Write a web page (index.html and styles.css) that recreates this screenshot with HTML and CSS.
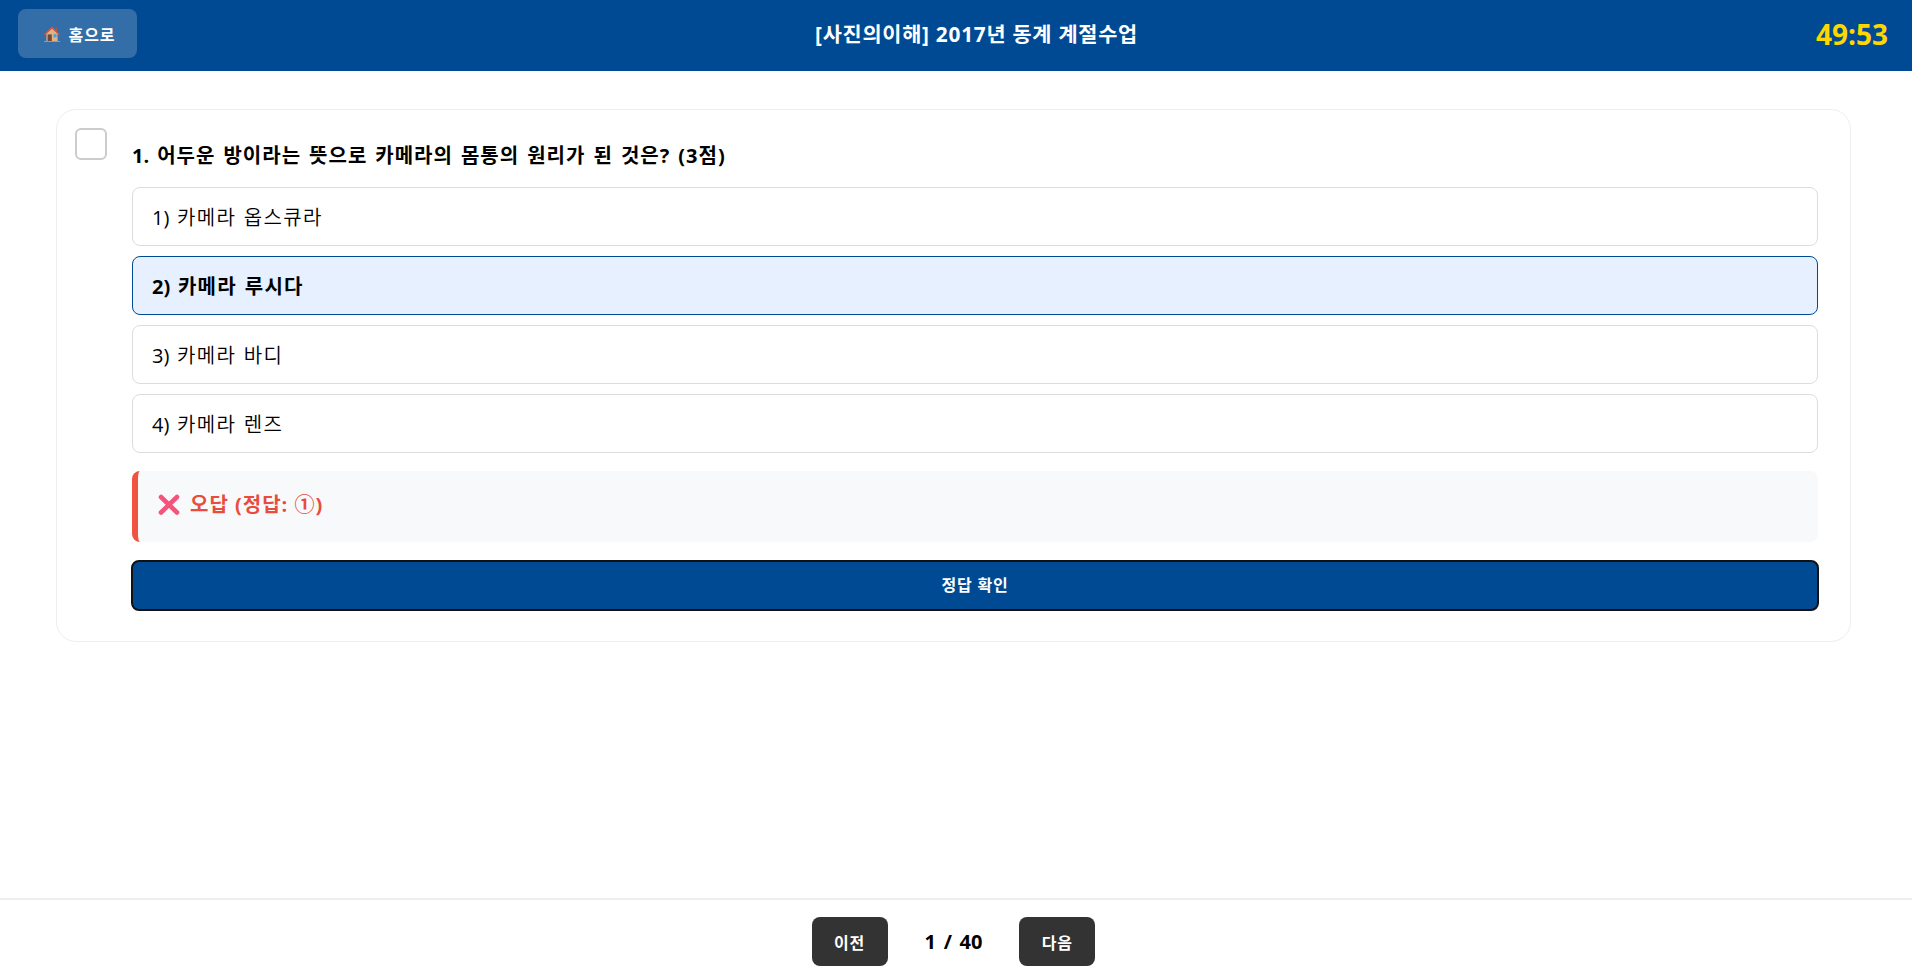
FILE: index.html
```html
<!DOCTYPE html>
<html lang="ko">
<head>
<meta charset="utf-8">
<title>[사진의이해] 2017년 동계 계절수업</title>
<link rel="stylesheet" href="styles.css">
</head>
<body>
<div class="app">
  <header class="topbar">
    <a class="home-btn">
      <svg class="home-icon" viewBox="0 0 16 16" aria-hidden="true">
        <rect x="11.4" y="1.4" width="1.8" height="4.4" fill="#a5574a"/>
        <path d="M2.4 7.4 8 2.4l5.6 5v7.6H2.4z" fill="#e3b27e"/>
        <path d="M0 8.4 8 .6l8 7.8-1 .8L8 2.6 1 9.2z" fill="#e2543f"/>
        <rect x="3.6" y="8.4" width="4.2" height="6.6" fill="#6f4a3c"/>
        <rect x="9.6" y="8.2" width="3" height="3.2" fill="#3fa6dc"/>
        <rect x="0" y="15" width="16" height="1" fill="#4fc76a"/>
      </svg>
      <span>홈으로</span>
    </a>
    <div class="title">[사진의이해] 2017년 동계 계절수업</div>
    <div class="timer">49:53</div>
  </header>

  <main class="content">
    <section class="card">
      <div class="check"></div>
      <div class="question">
        <h2 class="q-title"><span class="num">1.</span> 어두운 방이라는 뜻으로 카메라의 몸통의 원리가 된 것은? (3점)</h2>
        <div class="options">
          <div class="option"><span><span class="num">1)</span> 카메라 옵스큐라</span></div>
          <div class="option selected"><span><span class="num">2)</span> 카메라 루시다</span></div>
          <div class="option"><span><span class="num">3)</span> 카메라 바디</span></div>
          <div class="option"><span><span class="num">4)</span> 카메라 렌즈</span></div>
        </div>
        <div class="feedback">
          <svg class="x-icon" viewBox="0 0 22 22" aria-hidden="true"><path d="M3 3l16 15.5M19 3L3 18.5" stroke="#f4537c" stroke-width="4.6" stroke-linecap="round" fill="none"/></svg>
          <span class="feedback-text">오답 (정답: ①)</span>
        </div>
        <button class="check-btn">정답 확인</button>
      </div>
    </section>
  </main>

  <footer class="pager">
    <button class="nav-btn">이전</button>
    <span class="page">1 / 40</span>
    <button class="nav-btn">다음</button>
  </footer>
</div>
</body>
</html>
```

FILE: styles.css
```css
* { box-sizing: border-box; }
html, body { margin: 0; height: 100%; }
body {
  font-family: "Open Sans", "Noto Sans CJK KR", sans-serif;
  background: #fff;
  color: #000;
}
.app { height: 978px; display: flex; flex-direction: column; }

.topbar {
  height: 71px;
  background: #004a94;
  color: #fff;
  display: flex;
  align-items: center;
  justify-content: space-between;
  padding: 0 24px 4px 18px;
}
.home-btn {
  width: 119px;
  height: 49px;
  padding-left: 5px;
  border-radius: 8px;
  background: rgba(255,255,255,.2);
  display: flex;
  align-items: center;
  justify-content: center;
  gap: 8px;
  font-size: 16px;
  font-weight: 700;
  letter-spacing: 1px;
}
.home-icon { width: 16px; height: 16px; }
.title {
  font-size: 20.8px;
  font-weight: 700;
  letter-spacing: .75px;
  padding-bottom: 2px;
}
.timer { font-size: 28px; font-weight: 700; color: #ffd700; }

.content { flex: 1; padding: 38px 61px 0 56px; }
.card {
  height: 533px;
  border: 1px solid #eee;
  border-radius: 20px;
  display: flex;
  padding: 18px 32px 0 18px;
}
.check {
  width: 32px;
  height: 32px;
  border: 2px solid #ccc;
  border-radius: 6px;
  flex: none;
  margin-right: 25px;
}
.question { flex: 1; min-width: 0; }
.q-title {
  margin: 15px 0 18px;
  font-size: 20px;
  line-height: 26px;
  font-weight: 700;
  letter-spacing: 1px;
  word-spacing: 1.85px;
}
.options { display: flex; flex-direction: column; gap: 10px; }
.option {
  height: 59px;
  border: 1px solid #ddd;
  border-radius: 8px;
  padding: 0 19px;
  display: flex;
  align-items: center;
  font-size: 20px;
  font-weight: 350;
  letter-spacing: 1.3px;
  word-spacing: 1.2px;
}
.num { font-weight: 400; letter-spacing: 0; }
.q-title .num { font-weight: 700; }
.option.selected {
  background: #e6f0ff;
  border-color: #004a94;
  font-weight: 700;
}
.option.selected .num { font-weight: 700; }
.feedback {
  margin-top: 18px;
  height: 71px;
  background: #f8f9fa;
  border-left: 6px solid #f05340;
  border-radius: 8px;
  padding-left: 20px;
  display: flex;
  align-items: center;
  gap: 10px;
  color: #e74c3c;
  font-size: 20px;
  font-weight: 700;
}
.feedback-text {
  letter-spacing: 1px;
  padding-bottom: 6px;
}
.x-icon { width: 22px; height: 22px; margin-bottom: 3px; }
.check-btn {
  display: block;
  width: calc(100% + 2px);
  height: 51px;
  margin: 18px -1px 0;
  padding-bottom: 4px;
  background: #004a94;
  color: #fff;
  border: 2px solid #111;
  border-radius: 8px;
  font: 700 16px "Open Sans", "Noto Sans CJK KR", sans-serif;
  letter-spacing: .8px;
}

.pager {
  height: 80px;
  border-top: 2px solid #eee;
  padding: 5px 5px 0 0;
  display: flex;
  align-items: center;
  justify-content: center;
  gap: 37px;
}
.nav-btn {
  width: 76px;
  height: 49px;
  background: #333;
  color: #fff;
  border: 0;
  border-radius: 8px;
  font: 700 16px "Open Sans", "Noto Sans CJK KR", sans-serif;
  letter-spacing: .8px;
}
.page { font-size: 20px; font-weight: 700; word-spacing: 2.4px; }
```
